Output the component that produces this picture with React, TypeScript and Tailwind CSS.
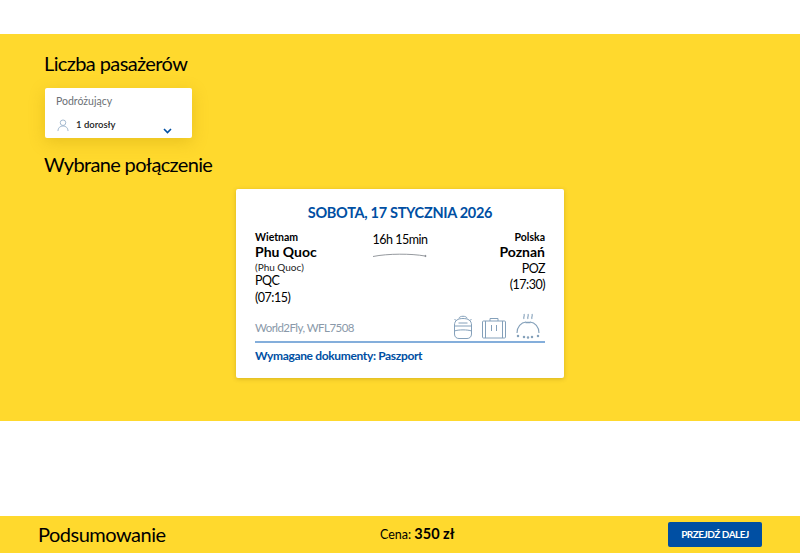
import React from 'react';

function Backpack() {
    return (
        <svg width="20" height="24" viewBox="0 0 20 24" fill="none" stroke="#84a0ba" strokeWidth="1">
            <path d="M6 3.5 C6 0.5 14 0.5 14 3.5" />
            <path d="M3.5 6 L1.5 4 M16.5 6 L18.5 4" />
            <path d="M1.5 10 C1.5 5.5 5 3.5 10 3.5 C15 3.5 18.5 5.5 18.5 10 V19 C18.5 22 16.5 23.5 14 23.5 H6 C3.5 23.5 1.5 22 1.5 19 Z" />
            <path d="M5.5 8 H14.5" />
            <path d="M1.5 11 H18.5 M1.5 16 C5 14.5 15 14.5 18.5 16" />
        </svg>
    );
}

function Suitcase() {
    return (
        <svg width="24" height="22" viewBox="0 0 24 22" fill="none" stroke="#84a0ba" strokeWidth="1">
            <path d="M8 4 V1.5 H16 V4" />
            <rect x="0.5" y="4" width="23" height="17" rx="1" />
            <path d="M3.5 4 V21 M20.5 4 V21" />
            <path d="M9.5 8 V14 M14.5 8 V14" />
        </svg>
    );
}

function Meal() {
    return (
        <svg width="26" height="26" viewBox="0 0 26 26" fill="none" stroke="#84a0ba" strokeWidth="1.1">
            <path d="M2 20 C2 14 6 9.5 11 9 M15 9 C20 9.5 24 14 24 20" />
            <path d="M9 6 C8 4 10 3 9 1 M13 6 C12 4 14 3 13 1 M17 6 C16 4 18 3 17 1" />
            <path d="M10.5 9.5 H15.5" strokeWidth="1.5" />
            <circle cx="3" cy="23" r="0.7" />
            <circle cx="9" cy="24" r="0.7" />
            <circle cx="13" cy="24.5" r="0.7" />
            <circle cx="17" cy="24" r="0.7" />
            <circle cx="23" cy="23" r="0.7" />
        </svg>
    );
}

export default function App() {
    return (
        <div className="w-[800px] h-[553px] bg-white flex flex-col overflow-hidden font-['Lato',sans-serif] text-black">
            <div className="h-[34px]" />

            <main className="h-[387px] bg-[#ffd92d] px-[45px]">
                <h2 className="text-[20px] leading-[24px] tracking-[-0.6px] mt-[17px] ml-[-1px]">Liczba pasażerów</h2>

                <div className="w-[147px] h-[50px] mt-[13px] bg-white rounded-[2px] shadow-[0_4px_16px_rgba(180,140,0,0.3)] px-[11px] pt-[7px]">
                    <div className="text-[10.5px] leading-[13px] text-[#6b6f76]">Podróżujący</div>
                    <div className="flex items-center mt-[8px]">
                        <svg className="ml-[1px]" width="12" height="13" viewBox="0 0 13 14" fill="none" stroke="#9db4cc" strokeWidth="1">
                            <circle cx="6.5" cy="4" r="3" />
                            <path d="M1 13 C1 9.5 3.5 7.5 6.5 7.5 C9.5 7.5 12 9.5 12 13" />
                        </svg>
                        <span className="ml-[7px] text-[9.5px] leading-[14px] font-semibold text-[#1b1b1b]">1 dorosły</span>
                        <svg className="ml-[47px] mt-[12px]" width="9" height="6" viewBox="0 0 9 6" fill="none" stroke="#004fa3" strokeWidth="1.6">
                            <path d="M1 1 L4.5 4.5 L8 1" />
                        </svg>
                    </div>
                </div>

                <h2 className="text-[20px] leading-[24px] tracking-[-0.65px] mt-[14px] ml-[-1px]">Wybrane połączenie</h2>

                <div className="w-[328px] h-[189px] ml-[191px] mt-[13px] bg-white rounded-[2px] shadow-[0_1px_4px_rgba(120,100,0,0.3)] px-[19px] pt-[15px]">
                    <div className="text-center text-[14.5px] leading-[18px] tracking-[-0.3px] font-bold text-[#004fa3]">SOBOTA, 17 STYCZNIA 2026</div>

                    <div className="flex justify-between mt-[9px] h-[85px]">
                        <div className="w-[110px]">
                            <div className="text-[10.5px] leading-[12px] font-bold">Wietnam</div>
                            <div className="text-[14px] leading-[18px] font-bold">Phu Quoc</div>
                            <div className="text-[10px] leading-[12px] text-[#222]">(Phu Quoc)</div>
                            <div className="text-[12.5px] leading-[16px] tracking-[-0.5px]">PQC</div>
                            <div className="text-[12.5px] leading-[17px] tracking-[-0.5px]">(07:15)</div>
                        </div>
                        <div className="w-[54px] flex flex-col items-center">
                            <div className="text-[12.5px] leading-[16px] tracking-[-0.5px] whitespace-nowrap mt-[1px]">16h 15min</div>
                            <svg className="mt-[4px]" width="54" height="6" viewBox="0 0 54 6" fill="none" stroke="#7a7f85" strokeWidth="0.8">
                                <path d="M0 4.5 C15 1.5 38 1.5 52 4" />
                                <circle cx="52.5" cy="4" r="0.6" fill="#7a7f85" />
                            </svg>
                        </div>
                        <div className="w-[110px] text-right">
                            <div className="text-[10.5px] leading-[12px] font-bold">Polska</div>
                            <div className="text-[14px] leading-[18px] font-bold">Poznań</div>
                            <div className="text-[12.5px] leading-[16px] tracking-[-0.5px]">POZ</div>
                            <div className="text-[12.5px] leading-[16px] tracking-[-0.5px]">(17:30)</div>
                        </div>
                    </div>

                    <div className="flex justify-between items-end h-[27px] border-b-2 border-[#84aedb] pb-[2px]">
                        <div className="text-[11.5px] leading-[16px] tracking-[-0.55px] text-[#8a99a9] mb-[3px]">World2Fly, WFL7508</div>
                        <div className="flex items-end gap-[9px] mr-[4px]">
                            <Backpack />
                            <Suitcase />
                            <Meal />
                        </div>
                    </div>

                    <div className="text-[12px] leading-[16px] tracking-[-0.35px] font-bold text-[#004fa3] mt-[5px]">Wymagane dokumenty: Paszport</div>
                </div>
            </main>

            <div className="h-[95px]" />

            <footer className="h-[37px] bg-[#ffd92d] flex items-center pl-[38px] pr-[38px]">
                <div className="w-[342px] text-[20px] leading-[24px] tracking-[-0.5px] mt-[-2px]">Podsumowanie</div>
                <div className="text-[12.5px] leading-[20px] mt-[-1px]">
                    Cena: <span className="text-[14.5px] font-bold">350 zł</span>
                </div>
                <button className="ml-auto w-[94px] h-[25px] bg-[#004fa3] rounded-[2px] text-white text-[10px] tracking-[-0.5px] font-bold">PRZEJDŹ DALEJ</button>
            </footer>
        </div>
    );
}
